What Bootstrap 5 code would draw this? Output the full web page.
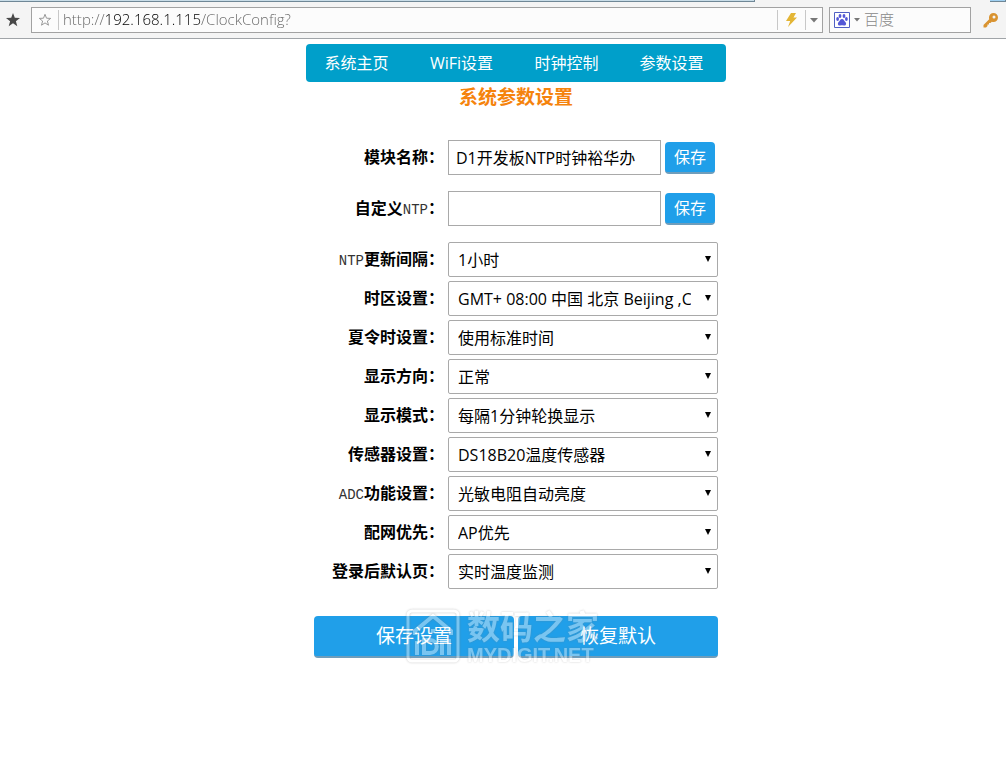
<!DOCTYPE html>
<html lang="zh-CN">
<head>
<meta charset="utf-8">
<meta name="viewport" content="width=device-width, initial-scale=1">
<title>系统参数设置</title>
<link href="https://cdn.jsdelivr.net/npm/bootstrap@5.3.0/dist/css/bootstrap.min.css" rel="stylesheet">
<style>
  body { font-family: "Open Sans", "Noto Sans CJK SC", sans-serif; font-size: 16px; line-height: 24px; color: #000; background: #fff; }

  /* browser toolbar */
  .tab-edge { height: 2px; background: #f4f4f4; }
  .tab-edge span { background: #c9dde8; border-bottom: 1px solid #6f8796; border-right: 1px solid #6f8796; }
  .tab-edge .tabs-open { width: 75%; }
  .tab-edge .tab-new { width: 16px; background: #9fd0f2; }
  .toolbar { height: 37px; background: #f4f4f4; border-bottom: 1px solid #a0a4a8; padding: 0 8px 0 6px; }
  .toolbar button { border: 0; background: none; padding: 0; display: flex; align-items: center; justify-content: center; }
  .toolbox { height: 26px; border: 1px solid #a2a2a2; background: #fcfcfc; }
  .toolbox input { border: 0; outline: 0; padding: 0 0 2px; min-width: 0; background-color: transparent; line-height: 22px; font-weight: 300; font-size: 15px; }
  .toolbox .url { color: transparent; background-image: linear-gradient(90deg, #666 43px, #000 43px, #000 138px, #666 138px); -webkit-background-clip: text; background-clip: text; }
  .toolbox input::placeholder { color: #888; opacity: 1; }
  .divider { width: 1px; height: 20px; background: #c8c8c8; }
  .addressbox { margin-left: 11px; padding-left: 6px; }
  .addressbox .bookmark { margin-right: 6px; }
  .searchbox { width: 142px; margin-left: 6px; }

  /* page */
  .page { padding: 5px 0 48px 26px; }
  .panel { max-width: 420px; }
  .menu { background: #009fca; border-radius: 4px; }
  .menu a { color: #fff; padding: 7px 4px 7px 0; }
  .title { color: #f5830c; font-size: 19px; line-height: 30px; font-weight: 700; }
  .settings { padding: 28px 8px 0; }
  .field { display: grid; grid-template-columns: 130px 1fr; column-gap: 4px; align-items: center; margin-bottom: 4px; }
  .field-wide { margin-bottom: 16px; }
  .field > label { text-align: right; font-weight: 700; white-space: nowrap; padding-bottom: 2px; }
  .field .latin { font-family: "Liberation Mono", monospace; font-size: 14px; line-height: 16px; font-weight: 400; color: #333; }
  .field .form-control, .field .form-select { height: 35px; border: 1px solid #a9a9a9; border-radius: 0; color: #000; font-size: 16px; line-height: 24px; }
  .field .form-control { padding: 4px 7px 5px; }
  .field .form-select { border-radius: 2px; padding: 4px 26px 4px 9px; text-overflow: clip;
    background: #fff url("data:image/svg+xml,%3Csvg xmlns='http://www.w3.org/2000/svg' viewBox='0 0 8 7'%3E%3Cpath d='M1 0h6L4 6z'/%3E%3C/svg%3E") no-repeat right 5px top 13px / 8px 7px; }
  .btn-blue { background: #209fe9; color: #fff; border: 0; border-bottom: 2px solid #6f9dbb; border-radius: 4px; --bs-btn-color: #fff; }
  .btn-save { width: 50px; height: 32px; padding: 0; font-size: 16px; line-height: 24px; margin-right: 3px; }
  .actions { margin-top: 27px; }
  .actions .btn { height: 42px; font-size: 19px; line-height: 24px; padding: 0; }
  .stamp { left: 92px; top: -8px; height: 56px; gap: 7px; opacity: .4; pointer-events: none; color: #fff; text-shadow: 0 0 2px #777; }
  .stamp svg { filter: drop-shadow(0 0 1px #777); overflow: visible; }
  .stamp .name { font: 700 33px/36px "Noto Sans CJK SC", sans-serif; }
  .stamp .site { font: 700 20px/20px "Liberation Sans", sans-serif; padding-top: 2px; }
</style>
</head>
<body>
<header>
  <div class="tab-edge d-flex justify-content-between"><span class="tabs-open"></span><span class="tab-new"></span></div>
  <div class="toolbar d-flex align-items-center">
    <button type="button" aria-label="收藏夹"><svg width="14" height="14" viewBox="0 0 14 14"><path fill="#484848" d="M7 0l1.8 4.8 5.2.2-4.1 3.2L11.300 13.300 7 10.300 2.700 13.300 4.100 8.200 0 5l5.200-.2z"/></svg></button>
    <div class="toolbox addressbox d-flex align-items-center flex-grow-1">
      <button type="button" class="bookmark" aria-label="添加收藏"><svg width="14" height="14" viewBox="0 0 14 14"><path fill="none" stroke="#999" d="M7 1.300l1.500 3.900 4.200.2-3.300 2.600 1.100 4.200L7 9.900l-3.500 2.300 1.100-4.200L1.300 5.400l4.200-.2z"/></svg></button>
      <span class="divider me-1"></span>
      <input class="url flex-grow-1" type="text" aria-label="地址" value="http://192.168.1.115/ClockConfig?">
      <span class="divider"></span>
      <button type="button" class="px-2" aria-label="极速模式"><svg width="11" height="14" viewBox="0 0 11 14"><path fill="#e3b535" d="M5 0h5L7.500 4.500H11L2 14l2.200-6H0z"/></svg></button>
      <span class="divider"></span>
      <button type="button" class="px-1" aria-label="历史地址"><svg width="8" height="5" viewBox="0 0 8 5"><path fill="#777" d="M0 0h8L4 4.500z"/></svg></button>
    </div>
    <div class="toolbox searchbox d-flex align-items-center px-1">
      <button type="button" aria-label="搜索引擎">
        <svg width="16" height="16" viewBox="0 0 16 16"><path fill="#fff" stroke="#5060c4" d="M.5.500h15v15H.5z"/><g fill="#5458d6"><ellipse cx="3.600" cy="7" rx="1.400" ry="1.900"/><ellipse cx="6" cy="4" rx="1.400" ry="1.900"/><ellipse cx="10" cy="4" rx="1.400" ry="1.900"/><ellipse cx="12.400" cy="7" rx="1.400" ry="1.900"/><path d="M8 7c1.700 0 2 1.700 3.300 2.900 1.400 1.300.9 3.900-1.200 3.700L8 13.300l-2.100.3c-2.100.2-2.600-2.400-1.200-3.700C6 8.700 6.300 7 8 7z"/></g></svg>
        <svg class="ms-1" width="6" height="4" viewBox="0 0 6 4"><path fill="#777" d="M0 0h6L3 3.500z"/></svg>
      </button>
      <input class="w-100 ms-1" type="text" aria-label="搜索" placeholder="百度">
    </div>
    <button type="button" class="ms-1 ps-2" aria-label="密码"><svg width="15" height="15" viewBox="0 0 15 15"><path fill="#d99330" fill-rule="evenodd" d="M6 4.500A4.500 4.500 0 1 1 10.500 9a5 5 0 0 1-1.700-.3L7.500 10H6v1.500H4.500V13L3 14.500H.500V12l5.700-5.800A4.500 4.500 0 0 1 6 4.500zM11 2.500a1.500 1.500 0 1 0 0 3 1.500 1.500 0 0 0 0-3z"/></svg></button>
  </div>
</header>

<main class="page">
  <div class="panel mx-auto">
    <nav class="menu row row-cols-4 g-0 text-center">
      <a class="text-decoration-none" href="#">系统主页</a>
      <a class="text-decoration-none" href="#">WiFi设置</a>
      <a class="text-decoration-none" href="#">时钟控制</a>
      <a class="text-decoration-none" href="#">参数设置</a>
    </nav>
    <h1 class="title text-center mb-0">系统参数设置</h1>
    <form class="settings">
      <div class="field field-wide">
        <label for="module">模块名称：</label>
        <div class="d-flex align-items-center gap-1"><input id="module" class="form-control" type="text" value="D1开发板NTP时钟裕华办"><button type="button" class="btn btn-blue btn-save flex-shrink-0">保存</button></div>
      </div>
      <div class="field field-wide">
        <label for="ntp">自定义<span class="latin">NTP</span>：</label>
        <div class="d-flex align-items-center gap-1"><input id="ntp" class="form-control" type="text"><button type="button" class="btn btn-blue btn-save flex-shrink-0">保存</button></div>
      </div>
      <div class="field"><label for="interval"><span class="latin">NTP</span>更新间隔：</label><select id="interval" class="form-select"><option>1小时</option></select></div>
      <div class="field"><label for="zone">时区设置：</label><select id="zone" class="form-select"><option>GMT+ 08:00 中国 北京 Beijing ,China</option></select></div>
      <div class="field"><label for="dst">夏令时设置：</label><select id="dst" class="form-select"><option>使用标准时间</option></select></div>
      <div class="field"><label for="direction">显示方向：</label><select id="direction" class="form-select"><option>正常</option></select></div>
      <div class="field"><label for="mode">显示模式：</label><select id="mode" class="form-select"><option>每隔1分钟轮换显示</option></select></div>
      <div class="field"><label for="sensor">传感器设置：</label><select id="sensor" class="form-select"><option>DS18B20温度传感器</option></select></div>
      <div class="field"><label for="adc"><span class="latin">ADC</span>功能设置：</label><select id="adc" class="form-select"><option>光敏电阻自动亮度</option></select></div>
      <div class="field"><label for="net">配网优先：</label><select id="net" class="form-select"><option>AP优先</option></select></div>
      <div class="field mb-0"><label for="home">登录后默认页：</label><select id="home" class="form-select"><option>实时温度监测</option></select></div>

      <div class="actions position-relative d-flex gap-1">
        <button type="submit" class="btn btn-blue w-50">保存设置</button>
        <button type="reset" class="btn btn-blue w-50">恢复默认</button>
        <div class="stamp position-absolute d-flex align-items-center">
          <svg width="54" height="54" viewBox="0 0 54 54" fill="none" stroke="#fff"><rect x="2" y="2" width="50" height="50" rx="4" stroke-width="3"/><g stroke-width="4"><path d="M9 26v-4L27 7l18 15v4"/><path d="M11 46V32M18 46V31h6c9 0 9 13 0 13h-6M27 20v4M36 46V32h7v14"/></g></svg>
          <div><div class="name">数码之家</div><div class="site">MYDIGIT.NET</div></div>
        </div>
      </div>
    </form>
  </div>
</main>
<script src="https://cdn.jsdelivr.net/npm/bootstrap@5.3.0/dist/js/bootstrap.bundle.min.js"></script>
</body>
</html>
